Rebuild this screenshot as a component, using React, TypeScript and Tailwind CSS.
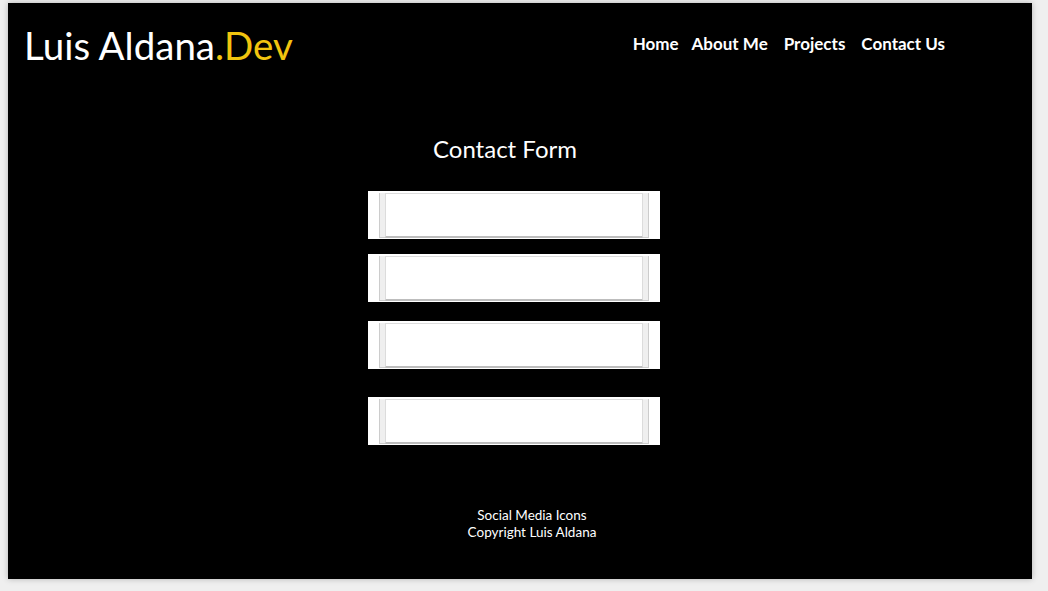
const font = { fontFamily: 'Lato, "Open Sans", sans-serif' }

function Field({ className = '' }: { className?: string }) {
  return (
    <div className={`w-[292px] h-[48px] bg-white pl-[11px] pt-[2px] ${className}`}>
      <div className="flex w-[270px] h-[45px]">
        <div className="w-[6px] h-full bg-[#efefef] border-l border-b border-[#cccccc]" />
        <div className="flex-1 h-full bg-white border border-[#dcdcdc] border-b-2 border-b-[#bdbdbd]" />
        <div className="w-[6px] h-full bg-[#efefef] border-r border-b border-[#cccccc]" />
      </div>
    </div>
  )
}

export default function App() {
  return (
    <div className="w-[1048px] h-[591px] bg-[#efefef] pt-[3px] pl-[8px]" style={font}>
      <div className="w-[1024px] h-[576px] bg-black shadow-[0_0_6px_rgba(0,0,0,0.25)] flex flex-col">
        <header className="h-[84px] flex items-center justify-between pl-[16px] pr-[87px]">
          <div className="text-[38.5px] text-white leading-none">
            Luis Aldana<span className="text-[#f1c40f]">.Dev</span>
          </div>
          <nav className="flex items-center text-[17px] font-bold text-white -mt-[2px]">
            <a className="mr-[13px]">Home</a>
            <a className="mr-[16px]">About Me</a>
            <a className="mr-[16px]">Projects</a>
            <a>Contact Us</a>
          </nav>
        </header>

        <main className="flex flex-col items-center">
          <h1 className="mt-[50px] text-[24px] text-white leading-none -translate-x-[15px]">Contact Form</h1>
          <form className="mt-[30px] mr-[12px] flex flex-col">
            <Field />
            <Field className="mt-[15px]" />
            <Field className="mt-[19px]" />
            <Field className="mt-[28px]" />
          </form>
        </main>

        <footer className="mt-[62px] flex flex-col items-center text-[13.5px] leading-[17px] text-white translate-x-[12px]">
          <div>Social Media Icons</div>
          <div>Copyright Luis Aldana</div>
        </footer>
      </div>
    </div>
  )
}
